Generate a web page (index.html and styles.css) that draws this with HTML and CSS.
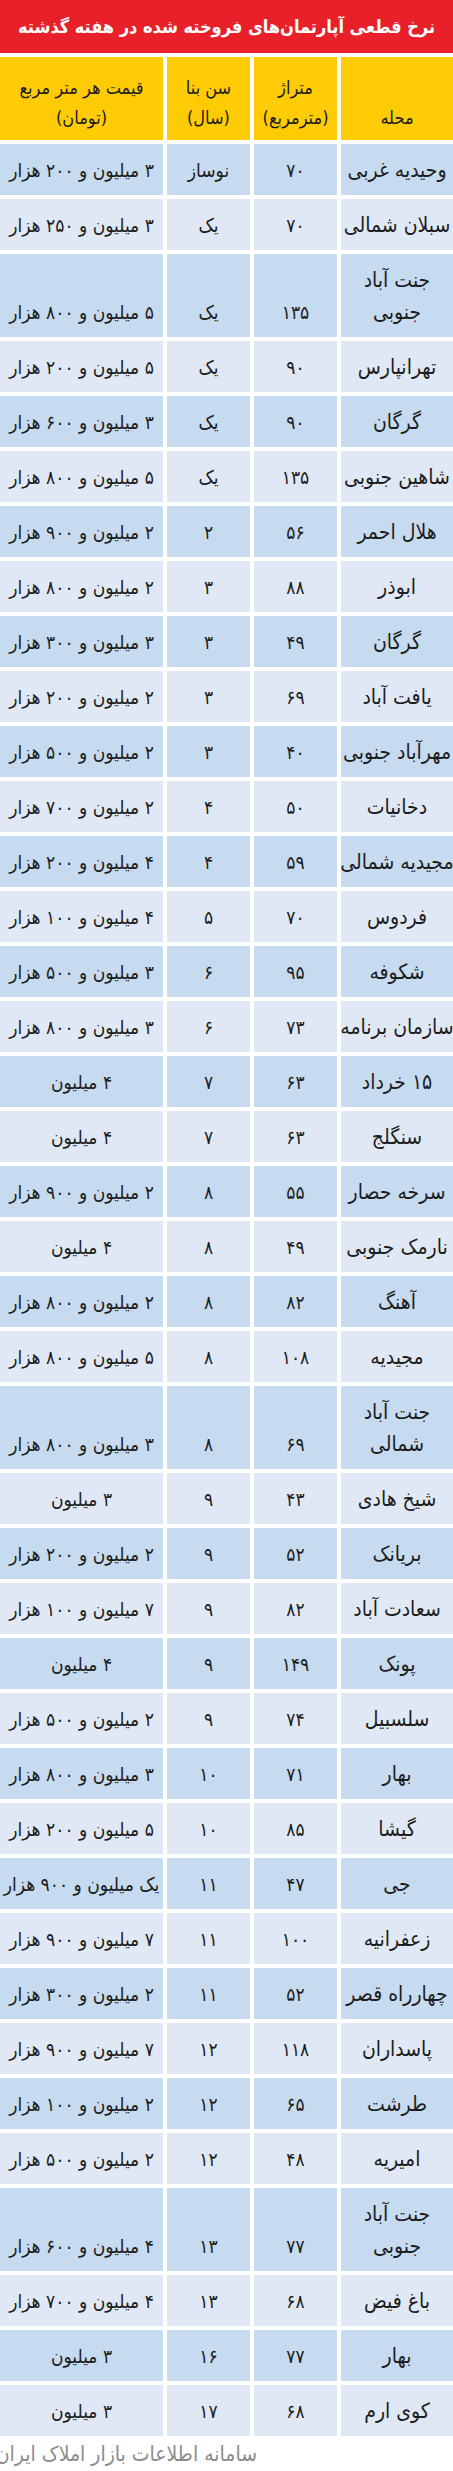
FILE: index.html
```html
<!DOCTYPE html>
<html lang="fa" dir="rtl">
<head>
<meta charset="utf-8">
<title>نرخ قطعی آپارتمان‌های فروخته شده در هفته گذشته</title>
<link rel="stylesheet" href="styles.css">
</head>
<body>
<div class="page">
  <h1 class="title">نرخ قطعی آپارتمان‌های فروخته شده در هفته گذشته</h1>
  <div class="table">
    <div class="row head">
      <div class="cell">محله</div>
      <div class="cell">متراژ<br>(مترمربع)</div>
      <div class="cell">سن بنا<br>(سال)</div>
      <div class="cell">قیمت هر متر مربع<br>(تومان)</div>
    </div>
    <div class="row dark"><div class="cell name">وحیدیه غربی</div><div class="cell">۷۰</div><div class="cell">نوساز</div><div class="cell">۳ میلیون و ۲۰۰ هزار</div></div>
    <div class="row light"><div class="cell name">سبلان شمالی</div><div class="cell">۷۰</div><div class="cell">یک</div><div class="cell">۳ میلیون و ۲۵۰ هزار</div></div>
    <div class="row dark"><div class="cell name">جنت آباد<br>جنوبی</div><div class="cell">۱۳۵</div><div class="cell">یک</div><div class="cell">۵ میلیون و ۸۰۰ هزار</div></div>
    <div class="row light"><div class="cell name">تهرانپارس</div><div class="cell">۹۰</div><div class="cell">یک</div><div class="cell">۵ میلیون و ۲۰۰ هزار</div></div>
    <div class="row dark"><div class="cell name">گرگان</div><div class="cell">۹۰</div><div class="cell">یک</div><div class="cell">۳ میلیون و ۶۰۰ هزار</div></div>
    <div class="row light"><div class="cell name">شاهین جنوبی</div><div class="cell">۱۳۵</div><div class="cell">یک</div><div class="cell">۵ میلیون و ۸۰۰ هزار</div></div>
    <div class="row dark"><div class="cell name">هلال احمر</div><div class="cell">۵۶</div><div class="cell">۲</div><div class="cell">۲ میلیون و ۹۰۰ هزار</div></div>
    <div class="row light"><div class="cell name">ابوذر</div><div class="cell">۸۸</div><div class="cell">۳</div><div class="cell">۲ میلیون و ۸۰۰ هزار</div></div>
    <div class="row dark"><div class="cell name">گرگان</div><div class="cell">۴۹</div><div class="cell">۳</div><div class="cell">۳ میلیون و ۳۰۰ هزار</div></div>
    <div class="row light"><div class="cell name">یافت آباد</div><div class="cell">۶۹</div><div class="cell">۳</div><div class="cell">۲ میلیون و ۲۰۰ هزار</div></div>
    <div class="row dark"><div class="cell name">مهرآباد جنوبی</div><div class="cell">۴۰</div><div class="cell">۳</div><div class="cell">۲ میلیون و ۵۰۰ هزار</div></div>
    <div class="row light"><div class="cell name">دخانیات</div><div class="cell">۵۰</div><div class="cell">۴</div><div class="cell">۲ میلیون و ۷۰۰ هزار</div></div>
    <div class="row dark"><div class="cell name">مجیدیه شمالی</div><div class="cell">۵۹</div><div class="cell">۴</div><div class="cell">۴ میلیون و ۲۰۰ هزار</div></div>
    <div class="row light"><div class="cell name">فردوس</div><div class="cell">۷۰</div><div class="cell">۵</div><div class="cell">۴ میلیون و ۱۰۰ هزار</div></div>
    <div class="row dark"><div class="cell name">شکوفه</div><div class="cell">۹۵</div><div class="cell">۶</div><div class="cell">۳ میلیون و ۵۰۰ هزار</div></div>
    <div class="row light"><div class="cell name">سازمان برنامه</div><div class="cell">۷۳</div><div class="cell">۶</div><div class="cell">۳ میلیون و ۸۰۰ هزار</div></div>
    <div class="row dark"><div class="cell name">۱۵ خرداد</div><div class="cell">۶۳</div><div class="cell">۷</div><div class="cell">۴ میلیون</div></div>
    <div class="row light"><div class="cell name">سنگلج</div><div class="cell">۶۳</div><div class="cell">۷</div><div class="cell">۴ میلیون</div></div>
    <div class="row dark"><div class="cell name">سرخه حصار</div><div class="cell">۵۵</div><div class="cell">۸</div><div class="cell">۲ میلیون و ۹۰۰ هزار</div></div>
    <div class="row light"><div class="cell name">نارمک جنوبی</div><div class="cell">۴۹</div><div class="cell">۸</div><div class="cell">۴ میلیون</div></div>
    <div class="row dark"><div class="cell name">آهنگ</div><div class="cell">۸۲</div><div class="cell">۸</div><div class="cell">۲ میلیون و ۸۰۰ هزار</div></div>
    <div class="row light"><div class="cell name">مجیدیه</div><div class="cell">۱۰۸</div><div class="cell">۸</div><div class="cell">۵ میلیون و ۸۰۰ هزار</div></div>
    <div class="row dark"><div class="cell name">جنت آباد<br>شمالی</div><div class="cell">۶۹</div><div class="cell">۸</div><div class="cell">۳ میلیون و ۸۰۰ هزار</div></div>
    <div class="row light"><div class="cell name">شیخ هادی</div><div class="cell">۴۳</div><div class="cell">۹</div><div class="cell">۳ میلیون</div></div>
    <div class="row dark"><div class="cell name">بریانک</div><div class="cell">۵۲</div><div class="cell">۹</div><div class="cell">۲ میلیون و ۲۰۰ هزار</div></div>
    <div class="row light"><div class="cell name">سعادت آباد</div><div class="cell">۸۲</div><div class="cell">۹</div><div class="cell">۷ میلیون و ۱۰۰ هزار</div></div>
    <div class="row dark"><div class="cell name">پونک</div><div class="cell">۱۴۹</div><div class="cell">۹</div><div class="cell">۴ میلیون</div></div>
    <div class="row light"><div class="cell name">سلسبیل</div><div class="cell">۷۴</div><div class="cell">۹</div><div class="cell">۲ میلیون و ۵۰۰ هزار</div></div>
    <div class="row dark"><div class="cell name">بهار</div><div class="cell">۷۱</div><div class="cell">۱۰</div><div class="cell">۳ میلیون و ۸۰۰ هزار</div></div>
    <div class="row light"><div class="cell name">گیشا</div><div class="cell">۸۵</div><div class="cell">۱۰</div><div class="cell">۵ میلیون و ۲۰۰ هزار</div></div>
    <div class="row dark"><div class="cell name">جی</div><div class="cell">۴۷</div><div class="cell">۱۱</div><div class="cell">یک میلیون و ۹۰۰ هزار</div></div>
    <div class="row light"><div class="cell name">زعفرانیه</div><div class="cell">۱۰۰</div><div class="cell">۱۱</div><div class="cell">۷ میلیون و ۹۰۰ هزار</div></div>
    <div class="row dark"><div class="cell name">چهارراه قصر</div><div class="cell">۵۲</div><div class="cell">۱۱</div><div class="cell">۲ میلیون و ۳۰۰ هزار</div></div>
    <div class="row light"><div class="cell name">پاسداران</div><div class="cell">۱۱۸</div><div class="cell">۱۲</div><div class="cell">۷ میلیون و ۹۰۰ هزار</div></div>
    <div class="row dark"><div class="cell name">طرشت</div><div class="cell">۶۵</div><div class="cell">۱۲</div><div class="cell">۲ میلیون و ۱۰۰ هزار</div></div>
    <div class="row light"><div class="cell name">امیریه</div><div class="cell">۴۸</div><div class="cell">۱۲</div><div class="cell">۲ میلیون و ۵۰۰ هزار</div></div>
    <div class="row dark"><div class="cell name">جنت آباد<br>جنوبی</div><div class="cell">۷۷</div><div class="cell">۱۳</div><div class="cell">۴ میلیون و ۶۰۰ هزار</div></div>
    <div class="row light"><div class="cell name">باغ فیض</div><div class="cell">۶۸</div><div class="cell">۱۳</div><div class="cell">۴ میلیون و ۷۰۰ هزار</div></div>
    <div class="row dark"><div class="cell name">بهار</div><div class="cell">۷۷</div><div class="cell">۱۶</div><div class="cell">۳ میلیون</div></div>
    <div class="row light"><div class="cell name">کوی ارم</div><div class="cell">۶۸</div><div class="cell">۱۷</div><div class="cell">۳ میلیون</div></div>
  </div>
  <div class="footer">سامانه اطلاعات بازار املاک ایران</div>
</div>
</body>
</html>
```

FILE: styles.css
```css
html, body {
  margin: 0;
  padding: 0;
  background: #ffffff;
}

.page {
  width: 453px;
  direction: rtl;
  font-family: "DejaVu Sans Condensed", "DejaVu Sans", sans-serif;
  color: #1c1c1c;
  overflow: hidden;
}

.title {
  margin: 0;
  height: 53px;
  background: #e7202a;
  color: #ffffff;
  font-size: 18px;
  font-weight: bold;
  line-height: 53px;
  text-align: center;
  white-space: nowrap;
}

.table {
  display: flex;
  flex-direction: column;
  gap: 4px;
  margin-top: 4px;
}

.row {
  display: grid;
  grid-template-columns: 112px 83px 83px 163px;
  column-gap: 4px;
}

.cell {
  display: flex;
  align-items: flex-end;
  justify-content: center;
  text-align: center;
  padding: 10px 0 9px;
  font-size: 19px;
  line-height: 32px;
  white-space: nowrap;
}

.cell.name {
  font-size: 21px;
}

.head .cell {
  background: #ffcb05;
  padding: 16px 0 7px;
  font-size: 18px;
  line-height: 30px;
}

.dark .cell {
  background: #c6daf0;
}

.light .cell {
  background: #dfe8f4;
}

.footer {
  padding: 3px 196px 0 0;
  font-size: 21px;
  line-height: 30px;
  color: #8c8c8c;
  white-space: nowrap;
}
```
